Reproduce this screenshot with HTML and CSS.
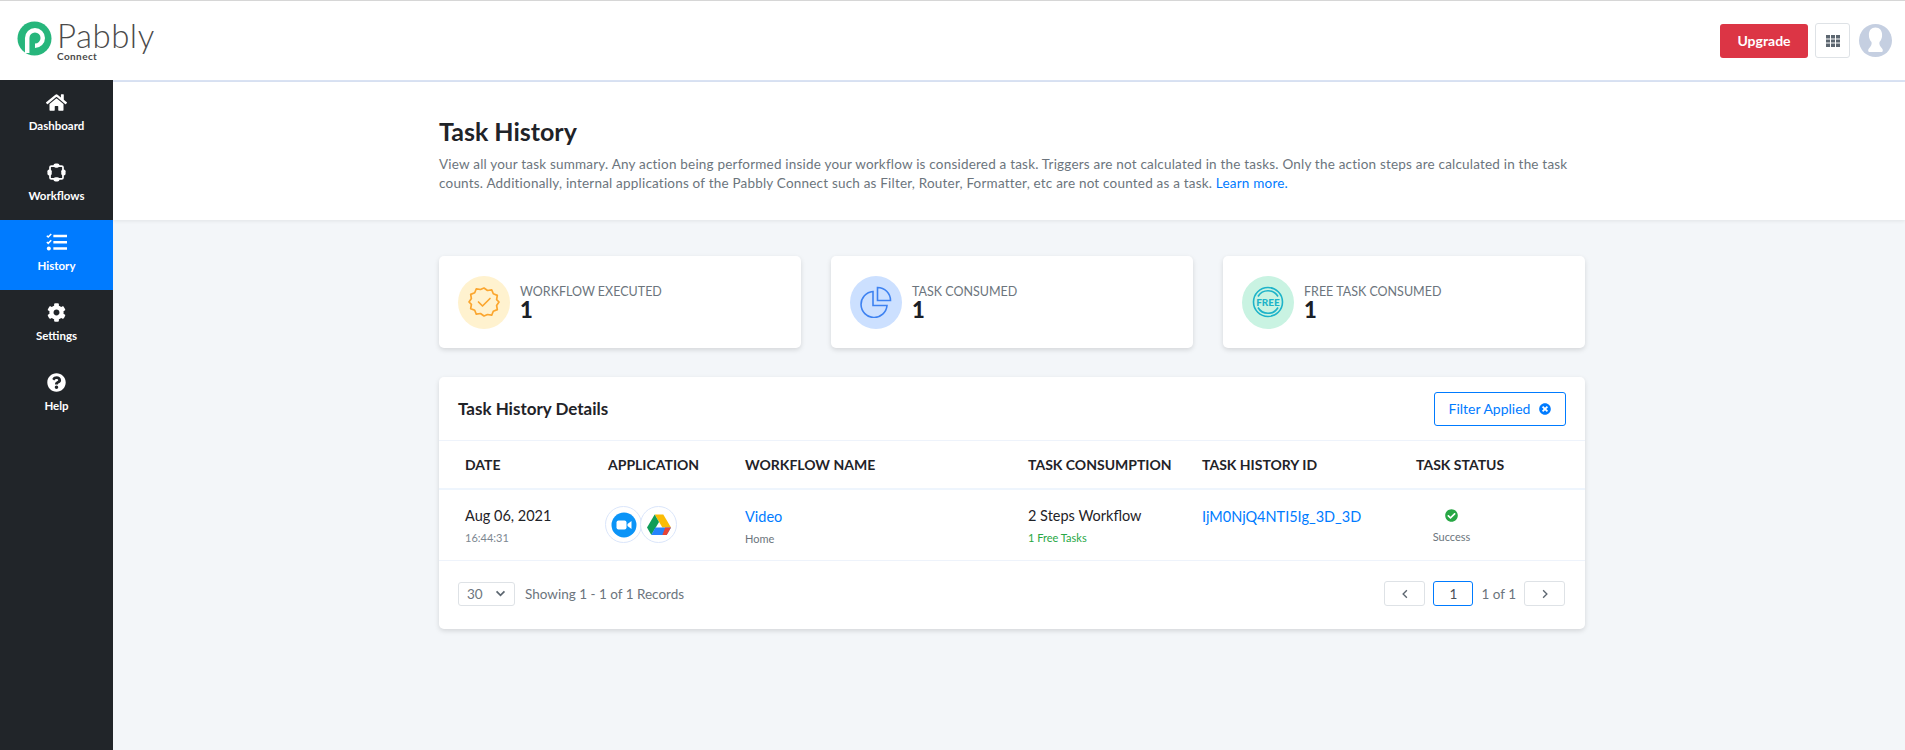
FILE: index.html
```html
<!DOCTYPE html>
<html lang="en">
<head>
	<meta charset="UTF-8">
	<meta name="viewport" content="width=device-width, initial-scale=1.0">
	<title>Task History - Pabbly Connect</title>
	<link rel="stylesheet" href="styles.css">
</head>
<body>
	<header class="topbar">
		<a class="logo" href="#">
			<svg class="logo-mark" viewBox="0 0 36 36">
				<circle cx="18" cy="18" r="17.5" fill="#27b67c"/>
				<path d="M10.5 33V17.5a8 8 0 1 1 8 8" fill="none" stroke="#fff" stroke-width="4.6"/>
			</svg>
			<span class="logo-text">
				<span class="logo-name">Pabbly</span>
				<span class="logo-sub">Connect</span>
			</span>
		</a>
		<div class="topbar-right">
			<button class="btn-upgrade">Upgrade</button>
			<button class="btn-apps">
				<svg viewBox="0 0 14 14" width="14" height="14"><path fill="#5c6670" d="M0 1h4v3.4H0zM5 1h4v3.4H5zM10 1h4v3.4h-4zM0 5.4h4v3.2H0zM5 5.4h4v3.2H5zM10 5.4h4v3.2h-4zM0 9.6h4V13H0zM5 9.6h4V13H5zM10 9.6h4V13h-4z"/></svg>
			</button>
			<svg class="avatar" viewBox="0 0 33 33">
				<defs><clipPath id="avatar-clip"><circle cx="16.5" cy="16.5" r="16.5"/></clipPath></defs>
				<circle cx="16.5" cy="16.5" r="16.5" fill="#c5cfe1"/>
				<path clip-path="url(#avatar-clip)" d="M16.5 3.5c-4.2 0-6.6 3-6.6 7.4 0 3 1 5.4 2.6 7.2.6 2.6-.6 4.2-2.4 6.2-1.6 1.800-1 4 .6 3.700h11.600c1.600.3 2.200-1.900.6-3.700-1.800-2-3-3.600-2.400-6.200 1.600-1.800 2.600-4.200 2.600-7.200 0-4.400-2.400-7.400-6.600-7.400z" fill="#fff"/>
			</svg>
		</div>
	</header>

	<div class="layout">
		<nav class="sidebar">
			<a class="nav-item" href="#">
				<svg class="nav-icon" viewBox="0 0 576 512"><path d="M280.37 148.26L96 300.11V464a16 16 0 0 0 16 16l112.06-.29a16 16 0 0 0 15.92-16V368a16 16 0 0 1 16-16h64a16 16 0 0 1 16 16v95.64a16 16 0 0 0 16 16.05L464 480a16 16 0 0 0 16-16V300L295.67 148.26a12.19 12.19 0 0 0-15.3 0zM571.6 251.47L488 182.56V44.05a12 12 0 0 0-12-12h-56a12 12 0 0 0-12 12v72.61L318.47 43a48 48 0 0 0-61 0L4.34 251.47a12 12 0 0 0-1.6 16.9l25.5 31A12 12 0 0 0 45.15 301l235.22-193.74a12.19 12.19 0 0 1 15.3 0L530.9 301a12 12 0 0 0 16.9-1.6l25.5-31a12 12 0 0 0-1.7-16.93z"/></svg>
				<span>Dashboard</span>
			</a>
			<a class="nav-item" href="#">
				<svg class="nav-icon" viewBox="0 0 22 22">
					<rect x="3.500" y="3.500" width="15" height="15" rx="1.500" fill="none" stroke="#fff" stroke-width="2"/>
					<rect x="7.500" y="0.500" width="7" height="5" rx="2.500"/>
					<rect x="7.500" y="16.500" width="7" height="5" rx="2.500"/>
					<rect x="0.500" y="7.500" width="5" height="7" rx="2"/>
					<rect x="16.500" y="7.500" width="5" height="7" rx="2"/>
				</svg>
				<span>Workflows</span>
			</a>
			<a class="nav-item active" href="#">
				<svg class="nav-icon" viewBox="0 0 20 18">
					<path d="M7 1.500h13v2.400H7zM7 7.500h13v2.400H7zM7 13.500h13v2.400H7z"/>
					<path d="M0.800 2.500l1.300 1.300L5 .8M0.800 8.500l1.300 1.300L5 6.800" fill="none" stroke="#fff" stroke-width="1.400"/>
					<circle cx="2.700" cy="14.700" r="1.900"/>
				</svg>
				<span>History</span>
			</a>
			<a class="nav-item" href="#">
				<svg class="nav-icon" viewBox="0 0 512 512"><path d="M487.4 315.7l-42.6-24.6c4.3-23.2 4.3-47 0-70.2l42.6-24.6c4.9-2.8 7.1-8.6 5.5-14-11.1-35.6-30-67.8-54.7-94.6-3.8-4.1-10-5.1-14.8-2.3L380.8 110c-17.9-15.4-38.5-27.3-60.8-35.1V25.8c0-5.6-3.900-10.500-9.400-11.700-36.700-8.200-74.300-7.800-109.200 0-5.500 1.200-9.400 6.100-9.400 11.700V75c-22.200 7.900-42.800 19.800-60.800 35.100L88.700 85.500c-4.900-2.800-11-1.900-14.800 2.300-24.700 26.700-43.600 58.900-54.700 94.600-1.700 5.400.6 11.200 5.500 14L67.300 221c-4.300 23.200-4.300 47 0 70.200l-42.600 24.600c-4.900 2.800-7.100 8.600-5.500 14 11.100 35.600 30 67.800 54.700 94.600 3.800 4.100 10 5.100 14.800 2.300l42.600-24.600c17.900 15.400 38.500 27.300 60.800 35.100v49.200c0 5.600 3.900 10.500 9.400 11.700 36.700 8.200 74.300 7.800 109.200 0 5.500-1.200 9.400-6.100 9.400-11.700v-49.200c22.200-7.900 42.800-19.800 60.800-35.100l42.600 24.600c4.900 2.800 11 1.900 14.800-2.300 24.700-26.700 43.600-58.900 54.700-94.600 1.500-5.500-.7-11.300-5.600-14.100zM256 336c-44.100 0-80-35.900-80-80s35.900-80 80-80 80 35.900 80 80-35.900 80-80 80z"/></svg>
				<span>Settings</span>
			</a>
			<a class="nav-item" href="#">
				<svg class="nav-icon" viewBox="0 0 512 512"><path d="M504 256c0 136.997-111.043 248-248 248S8 392.997 8 256C8 119.083 119.043 8 256 8s248 111.083 248 248zM262.655 90c-54.497 0-89.255 22.957-116.549 63.758-3.536 5.286-2.353 12.415 2.715 16.258l34.699 26.310c5.205 3.947 12.621 3.008 16.665-2.122 17.864-22.658 30.113-35.797 57.303-35.797 20.429 0 45.698 13.148 45.698 32.958 0 14.976-12.363 22.667-32.534 33.976C247.128 238.528 216 254.941 216 296v4c0 6.627 5.373 12 12 12h56c6.627 0 12-5.373 12-12v-1.333c0-28.462 83.186-29.647 83.186-106.667 0-58.002-60.165-102-116.531-102zM256 338c-25.365 0-46 20.635-46 46 0 25.364 20.635 46 46 46s46-20.636 46-46c0-25.365-20.635-46-46-46z"/></svg>
				<span>Help</span>
			</a>
		</nav>

		<main class="content">
			<section class="hero">
				<div class="wrap">
					<h1>Task History</h1>
					<p>View all your task summary. Any action being performed inside your workflow is considered a task. Triggers are not calculated in the tasks. Only the action steps are calculated in the task counts. Additionally, internal applications of the Pabbly Connect such as Filter, Router, Formatter, etc are not counted as a task. <a href="#">Learn more.</a></p>
				</div>
			</section>

			<div class="wrap">
				<div class="stats">
					<div class="stat">
						<div class="stat-icon orange">
							<svg viewBox="0 0 32 32" width="32" height="32" fill="none" stroke="#fba62f" stroke-width="1.700" stroke-linejoin="round" stroke-linecap="round">
								<path d="M16 2l3.500 2.500 4.200-.7 1.600 4 4 1.600-.7 4.200L31 16l-2.400 3.400.7 4.200-4 1.600-1.600 4-4.200-.7L16 30l-3.500-2.500-4.200.7-1.600-4-4-1.600.7-4.200L1 16l2.400-3.400-.7-4.200 4-1.600 1.600-4 4.200.7z"/>
								<path d="M10.500 16l4 4 7.500-7.500"/>
							</svg>
						</div>
						<div>
							<div class="stat-label">Workflow Executed</div>
							<div class="stat-value">1</div>
						</div>
					</div>
					<div class="stat">
						<div class="stat-icon blue">
							<svg viewBox="0 0 32 32" width="32" height="32" fill="none" stroke="#3e82f1" stroke-width="1.600">
								<path d="M13 5.500a13 13 0 1 0 14 14H13z"/>
								<path d="M17.500 1.500a13 13 0 0 1 13 13h-13z"/>
							</svg>
						</div>
						<div>
							<div class="stat-label">Task Consumed</div>
							<div class="stat-value">1</div>
						</div>
					</div>
					<div class="stat">
						<div class="stat-icon green">
							<svg viewBox="0 0 32 32" width="32" height="32" fill="none" stroke="#1db3c9" stroke-width="1.600">
								<circle cx="16" cy="16" r="14.500"/>
								<path d="M6 10.500a11.500 11.500 0 0 1 20 0M6 21.500a11.500 11.500 0 0 0 20 0"/>
								<text class="free-text" x="16" y="20" text-anchor="middle">FREE</text>
							</svg>
						</div>
						<div>
							<div class="stat-label">Free Task Consumed</div>
							<div class="stat-value">1</div>
						</div>
					</div>
				</div>

				<section class="panel">
					<div class="panel-head">
						<h2>Task History Details</h2>
						<button class="btn-filter">Filter Applied
							<svg viewBox="0 0 512 512" width="12" height="12"><path fill="#007bff" d="M256 8C119 8 8 119 8 256s111 248 248 248 248-111 248-248S393 8 256 8zm121.600 313.100c4.700 4.700 4.700 12.300 0 17L338 377.600c-4.700 4.700-12.300 4.700-17 0L256 312l-65.100 65.600c-4.700 4.700-12.300 4.700-17 0L134.400 338c-4.700-4.700-4.700-12.300 0-17l65.600-65-65.600-65.100c-4.700-4.700-4.700-12.300 0-17l39.600-39.600c4.700-4.700 12.300-4.700 17 0l65 65.700 65.100-65.600c4.700-4.700 12.300-4.700 17 0l39.600 39.600c4.700 4.700 4.700 12.300 0 17L312 256l65.600 65.100z"/></svg>
						</button>
					</div>

					<div class="row row-head">
						<div>Date</div>
						<div>Application</div>
						<div>Workflow Name</div>
						<div>Task Consumption</div>
						<div>Task History ID</div>
						<div class="center">Task Status</div>
					</div>

					<div class="row row-body">
						<div>
							<div class="main-text">Aug 06, 2021</div>
							<div class="sub-text muted">16:44:31</div>
						</div>
						<div class="apps">
							<span class="app-icon">
								<svg viewBox="0 0 26 26" width="26" height="26">
									<circle cx="13" cy="13" r="12.500" fill="#0b94f7"/>
									<rect x="5.500" y="8.500" width="10" height="9" rx="2" fill="#fff"/>
									<path d="M16.500 12l4-3v8l-4-3z" fill="#fff"/>
								</svg>
							</span>
							<span class="app-icon overlap">
								<svg viewBox="0 0 26 24" width="26" height="24">
									<path d="M8.700 1.500h8.600L25 14.500h-8.600z" fill="#fbbc04"/>
									<path d="M8.700 1.500L1 14.500l4.300 7.500L13 8.900z" fill="#0f9d58"/>
									<path d="M9.300 14.500H25l-4.300 7.500H5.300z" fill="#2684fc"/>
									<path d="M20.700 22L25 14.500h-5.800l-2.800 7.500z" fill="#ea4335"/>
								</svg>
							</span>
						</div>
						<div>
							<a class="main-text link" href="#">Video</a>
							<div class="sub-text">Home</div>
						</div>
						<div>
							<div class="main-text">2 Steps Workflow</div>
							<div class="sub-text success">1 Free Tasks</div>
						</div>
						<div>
							<a class="main-text link" href="#">IjM0NjQ4NTI5Ig_3D_3D</a>
						</div>
						<div class="center">
							<svg class="status-icon" viewBox="0 0 512 512" width="13" height="13"><path fill="#28a745" d="M504 256c0 136.967-111.033 248-248 248S8 392.967 8 256 119.033 8 256 8s248 111.033 248 248zM227.314 387.314l184-184c6.248-6.248 6.248-16.379 0-22.627l-22.627-22.627c-6.248-6.249-16.379-6.249-22.628 0L216 308.118l-70.059-70.059c-6.248-6.248-16.379-6.248-22.628 0l-22.627 22.627c-6.248 6.248-6.248 16.379 0 22.627l104 104c6.249 6.250 16.379 6.250 22.628.001z"/></svg>
							<div class="sub-text">Success</div>
						</div>
					</div>

					<div class="panel-foot">
						<div class="foot-left">
							<div class="per-page">30
								<svg viewBox="0 0 12 8" width="11" height="7"><path d="M1.500 1.500L6 6l4.500-4.500" fill="none" stroke="#5c6670" stroke-width="2"/></svg>
							</div>
							<span>Showing 1 - 1 of 1 Records</span>
						</div>
						<div class="pager">
							<button class="page-btn"><svg viewBox="0 0 8 12" width="6" height="10"><path d="M6.500 1L1.500 6l5 5" fill="none" stroke="#5c6670" stroke-width="1.800"/></svg></button>
							<div class="page-now">1</div>
							<span>1 of 1</span>
							<button class="page-btn"><svg viewBox="0 0 8 12" width="6" height="10"><path d="M1.500 1l5 5-5 5" fill="none" stroke="#5c6670" stroke-width="1.800"/></svg></button>
						</div>
					</div>
				</section>
			</div>
		</main>
	</div>
</body>
</html>
```

FILE: styles.css
```css
* {
  box-sizing: border-box;
}
body {
  margin: 0;
  font-family: Lato, "Open Sans", sans-serif;
  background-color: #f3f6f9;
  color: #1f2328;
}
a {
  text-decoration: none;
}
button {
  font-family: inherit;
  cursor: pointer;
}
h1, h2, p {
  margin: 0;
}

/* top bar */
.topbar {
  height: 82px;
  background-color: #fff;
  border-top: 1px solid #d6d6d6;
  border-bottom: 2px solid #dbe4f5;
  display: flex;
  justify-content: space-between;
  align-items: center;
  padding: 0 13px 0 17px;
}
.logo {
  display: flex;
  align-items: flex-start;
  gap: 5px;
}
.logo-mark {
  width: 35px;
  height: 35px;
}
.logo-text {
  display: flex;
  flex-direction: column;
  color: #4a4a4a;
}
.logo-name {
  font-size: 33px;
  font-weight: 300;
  line-height: 30px;
  margin-top: -1px;
  letter-spacing: .5px;
}
.logo-sub {
  font-size: 10px;
  font-weight: 700;
  line-height: 10px;
  letter-spacing: .4px;
  margin-top: 1px;
}
.topbar-right {
  display: flex;
  align-items: center;
  gap: 7px;
}
.btn-upgrade {
  width: 88px;
  height: 34px;
  background-color: #dc3545;
  border: none;
  border-radius: 3px;
  color: #fff;
  font-size: 14px;
  font-weight: 700;
}
.btn-apps {
  width: 35px;
  height: 35px;
  background-color: #fff;
  border: 1px solid #dee2e6;
  border-radius: 3px;
  display: flex;
  align-items: center;
  justify-content: center;
  padding: 0;
}
.avatar {
  width: 33px;
  height: 33px;
  margin-left: 2px;
}

/* sidebar */
.layout {
  display: flex;
  min-height: 668px;
}
.sidebar {
  width: 113px;
  flex-shrink: 0;
  background-color: #212529;
  margin-top: -2px;
}
.nav-item {
  height: 70px;
  display: flex;
  flex-direction: column;
  align-items: center;
  color: #fff;
  font-size: 11.500px;
  font-weight: 700;
  padding-top: 13px;
  gap: 7px;
}
.nav-item.active {
  background-color: #007bff;
}
.nav-icon {
  height: 19px;
  width: 21px;
  fill: #fff;
}

/* main */
.content {
  flex: 1;
}
.wrap {
  width: 1146px;
  margin-left: 326px;
}
.hero {
  background-color: #fff;
  height: 138px;
  padding-top: 34px;
  box-shadow: 0 1px 4px rgba(0, 0, 0, .08);
}
.hero h1 {
  font-size: 25px;
  font-weight: 700;
  line-height: 30px;
  margin-bottom: 9px;
}
.hero p {
  font-size: 13.500px;
  line-height: 19px;
  color: #6c757d;
  letter-spacing: .2px;
}
.hero a {
  color: #007bff;
}

/* stat cards */
.stats {
  display: grid;
  grid-template-columns: repeat(3, 362px);
  gap: 30px;
  margin-top: 36px;
}
.stat {
  height: 92px;
  background-color: #fff;
  border-radius: 5px;
  box-shadow: 0 2px 5px rgba(0, 0, 0, .13);
  display: flex;
  align-items: center;
  gap: 10px;
  padding: 0 19px;
}
.stat-icon {
  width: 52px;
  height: 53px;
  border-radius: 50%;
  display: flex;
  align-items: center;
  justify-content: center;
}
.stat-icon.orange {
  background-color: #fff2cf;
}
.stat-icon.blue {
  background-color: #cce0ff;
}
.stat-icon.green {
  background-color: #c9f3e2;
}
.free-text {
  font-size: 10px;
  font-weight: 900;
  fill: #1db3c9;
  stroke: none;
}
.stat-label {
  font-size: 12.500px;
  line-height: 15px;
  color: #6c757d;
  text-transform: uppercase;
}
.stat-value {
  font-size: 22px;
  font-weight: 900;
  line-height: 22px;
  color: #1a2027;
}

/* table panel */
.panel {
  background-color: #fff;
  border-radius: 5px;
  box-shadow: 0 2px 5px rgba(0, 0, 0, .13);
  margin-top: 29px;
  height: 252px;
}
.panel-head {
  height: 64px;
  display: flex;
  justify-content: space-between;
  align-items: center;
  padding: 0 19px;
  border-bottom: 1px solid #eef3fb;
}
.panel-head h2 {
  font-size: 17px;
  font-weight: 700;
}
.btn-filter {
  width: 132px;
  height: 34px;
  background-color: #fff;
  border: 1px solid #007bff;
  border-radius: 3px;
  color: #007bff;
  font-size: 14px;
  display: flex;
  align-items: center;
  justify-content: center;
  gap: 9px;
  padding: 0;
}
.row {
  display: grid;
  grid-template-columns: 143px 137px 283px 174px 1fr 71px;
  padding: 0 98px 0 26px;
}
.row-head {
  height: 49px;
  align-items: center;
  font-size: 14px;
  font-weight: 700;
  text-transform: uppercase;
  border-bottom: 2px solid #eef5fd;
}
.row-head .center {
  white-space: nowrap;
}
.row-body {
  height: 71px;
  padding-top: 16px;
  border-bottom: 1px solid #eef3fb;
}
.center {
  text-align: center;
}
.main-text {
  font-size: 14.500px;
  line-height: 20px;
}
.sub-text {
  font-size: 11px;
  line-height: 14px;
  margin-top: 5px;
  color: #6c757d;
}
.link {
  color: #007bff;
}
.muted {
  color: #7d8791;
}
.success {
  color: #28a745;
}
.apps {
  display: flex;
  margin-left: -3px;
}
.app-icon {
  width: 37px;
  height: 37px;
  border: 1px solid #dbe6fb;
  border-radius: 50%;
  background-color: #fff;
  display: flex;
  align-items: center;
  justify-content: center;
}
.app-icon.overlap {
  margin-left: -2px;
}
.status-icon {
  display: block;
  margin: 3px auto 0;
}
.status-icon + .sub-text {
  margin-top: 8px;
}
.panel-foot {
  display: flex;
  justify-content: space-between;
  padding: 20px 20px 0 19px;
  font-size: 13.500px;
  color: #6c757d;
}
.foot-left {
  display: flex;
  align-items: center;
  gap: 10px;
}
.per-page {
  width: 57px;
  height: 24px;
  border: 1px solid #dee2e6;
  border-radius: 3px;
  display: flex;
  align-items: center;
  justify-content: space-between;
  padding: 0 8px;
}
.pager {
  display: flex;
  align-items: center;
  gap: 8px;
}
.page-btn {
  width: 41px;
  height: 25px;
  background-color: #fff;
  border: 1px solid #dee2e6;
  border-radius: 3px;
  display: flex;
  align-items: center;
  justify-content: center;
  padding: 0;
}
.page-now {
  width: 40px;
  height: 25px;
  border: 1px solid #007bff;
  border-radius: 3px;
  display: flex;
  align-items: center;
  justify-content: center;
  color: #495057;
}
```
